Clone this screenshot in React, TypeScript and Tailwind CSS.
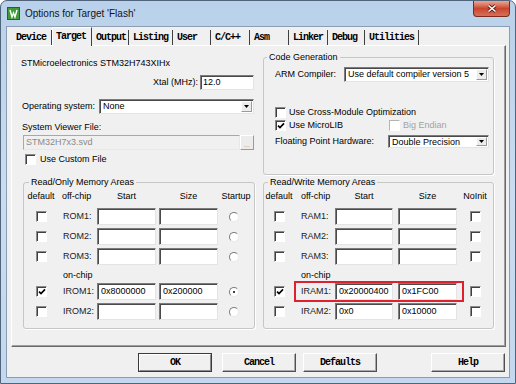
import type { ReactNode } from "react";

const SANS = "font-['Liberation_Sans',Arial,sans-serif]";
const MONO = "font-['Liberation_Mono','Courier_New',monospace]";

const sunken =
  "border border-t-[#7b7b7b] border-l-[#7b7b7b] border-r-[#e4e4e4] border-b-[#e4e4e4] shadow-[inset_1px_1px_0_#4a4a4a]";

const tabs = [
  { label: "Device", w: "w-[40px]" },
  { label: "Target", w: "w-[40px]", active: true },
  { label: "Output", w: "w-[37px]" },
  { label: "Listing", w: "w-[44px]" },
  { label: "User", w: "w-[38px]" },
  { label: "C/C++", w: "w-[39px]" },
  { label: "Asm", w: "w-[39px]" },
  { label: "Linker", w: "w-[39px]" },
  { label: "Debug", w: "w-[37px]" },
  { label: "Utilities", w: "w-[54px]" },
];

const Check = ({ checked, disabled }: { checked?: boolean; disabled?: boolean }) => (
  <span
    className={
      disabled
        ? "relative inline-block h-[11px] w-[11px] shrink-0 border border-t-[#b4b4b4] border-l-[#b4b4b4] border-r-white border-b-white bg-white"
        : "relative inline-block h-[11px] w-[11px] shrink-0 border border-t-[#8a8a8a] border-l-[#8a8a8a] border-r-white border-b-white bg-white shadow-[inset_1px_1px_0_#404040]"
    }
  >
    {checked && (
      <svg className="absolute left-[1px] top-[1px]" width="8" height="8" viewBox="0 0 8 8">
        <path d="M1 3.6 L3 5.6 L7 1.4" stroke="#000" strokeWidth="1.7" fill="none" />
      </svg>
    )}
  </span>
);

const Radio = ({ on }: { on?: boolean }) => (
  <span className="relative inline-block h-[10px] w-[10px] shrink-0 rounded-full border border-t-[#7d7d7d] border-l-[#7d7d7d] border-r-[#e8e8e8] border-b-[#e8e8e8] bg-white">
    {on && <span className="absolute left-[3px] top-[3px] h-[2px] w-[2px] rounded-full bg-black" />}
  </span>
);

const Input = ({ w, value }: { w: string; value?: string }) => (
  <div className={`${w} h-[17px] bg-white pl-[3px] text-[9px] leading-[14px] ${sunken}`}>
    {value}
  </div>
);

const Select = ({ w, h, value }: { w: string; h: string; value: string }) => (
  <div className={`${w} ${h} flex items-stretch bg-white ${sunken}`}>
    <span className="flex-1 truncate pl-[3px] text-[9px] leading-[12px]">{value}</span>
    <span className="my-[1px] mr-[1px] flex w-[11px] items-center justify-center border border-t-white border-l-white border-r-[#9a9a9a] border-b-[#9a9a9a] bg-[#ececec]">
      <svg width="5" height="3" viewBox="0 0 5 3">
        <path d="M0 0 H5 L2.5 3 Z" fill="#000" />
      </svg>
    </span>
  </div>
);

const Group = ({ title, legendMl, h, children }: { title: string; legendMl: string; h: string; children: ReactNode }) => (
  <fieldset className={`${h} rounded-[3px] border border-[#c6c6c6] shadow-[1px_1px_0_#ffffff]`}>
    <legend className={`${legendMl} px-[2px] text-[9px] leading-[12px] text-black`}>{title}</legend>
    {children}
  </fieldset>
);

type MemRow = { name: string; start?: string; size?: string; on?: boolean; flag?: boolean };

const romRows: MemRow[] = [
  { name: "ROM1:" },
  { name: "ROM2:" },
  { name: "ROM3:" },
];
const iromRows: MemRow[] = [
  { name: "IROM1:", start: "0x8000000", size: "0x200000", on: true, flag: true },
  { name: "IROM2:" },
];
const ramRows: MemRow[] = [
  { name: "RAM1:" },
  { name: "RAM2:" },
  { name: "RAM3:" },
];
const iramRows: MemRow[] = [
  { name: "IRAM1:", start: "0x20000400", size: "0x1FC00", on: true },
  { name: "IRAM2:", start: "0x0", size: "0x10000" },
];

const RomLine = ({ row }: { row: MemRow }) => (
  <div className="flex h-[17px] items-center">
    <div className="flex w-[34px] justify-center">
      <Check checked={row.on} />
    </div>
    <div className="w-[39px] pl-[5px] text-[9px] text-[#222]">{row.name}</div>
    <Input w="w-[59px]" value={row.start} />
    <div className="w-[3px]" />
    <Input w="w-[59px]" value={row.size} />
    <div className="flex w-[36px] justify-center pr-[4px]">
      <Radio on={row.flag} />
    </div>
  </div>
);

const RamLine = ({ row, marked }: { row: MemRow; marked?: boolean }) => (
  <div className="relative flex h-[17px] items-center">
    <div className="flex w-[30px] justify-center">
      <Check checked={row.on} />
    </div>
    <div className="w-[41px] pl-[7px] text-[9px] text-[#222]">{row.name}</div>
    <Input w="w-[58px]" value={row.start} />
    <div className="w-[5px]" />
    <Input w="w-[59px]" value={row.size} />
    <div className="flex w-[36px] justify-center">
      <Check />
    </div>
    {marked && (
      <div className="pointer-events-none absolute left-[30px] top-[-2px] h-[21px] w-[170px] border-2 border-[#e0202e]" />
    )}
  </div>
);

const Btn = ({ label, w, isDefault }: { label: string; w: string; isDefault?: boolean }) =>
  isDefault ? (
    <div className={`${w} h-[19px] border border-[#3a3a3a]`}>
      <div className={`flex h-full items-center justify-center border border-t-white border-l-white border-r-[#8a8a8a] border-b-[#8a8a8a] bg-[#f0f0f0] text-[10px] font-bold tracking-[-1px] ${MONO}`}>
        {label}
      </div>
    </div>
  ) : (
    <div className={`${w} flex h-[19px] items-center justify-center border border-t-white border-l-white border-r-[#505050] border-b-[#505050] bg-[#f0f0f0] shadow-[inset_-1px_-1px_0_#a8a8a8] text-[10px] font-bold tracking-[-1px] ${MONO}`}>
      {label}
    </div>
  );

export default function App() {
  return (
    <div className={`h-[384px] w-[516px] bg-white ${SANS}`}>
      <div className="flex h-full w-full flex-col overflow-hidden rounded-t-[7px] border border-[#50647b] bg-gradient-to-b from-[#b9d1ea] via-[#cadcf0] to-[#c3d8ee]">
        {/* title bar */}
        <div className="relative flex h-[25px] items-center pl-[6px]">
          <svg width="13" height="13" viewBox="0 0 13 13">
            <rect x="0.5" y="0.5" width="12" height="12" fill="#3e9a3a" stroke="#27602a" />
            <path d="M3 3 L5 10 L6.5 6 L8 10 L10 3" stroke="#ffffff" strokeWidth="1.4" fill="none" />
          </svg>
          <span className="ml-[5px] text-[10px] leading-[12px] text-[#141414]">Options for Target 'Flash'</span>
          <div className="absolute right-[5px] top-0 flex h-[16px] w-[37px] items-center justify-center rounded-b-[4px] border border-t-0 border-[#7d2a1d] bg-gradient-to-b from-[#e8a897] via-[#c9452d] to-[#d4705a]">
            <svg width="10" height="9" viewBox="0 0 10 9">
              <path d="M1.5 1.5 L8.5 7.5 M8.5 1.5 L1.5 7.5" stroke="#5a1a10" strokeWidth="3.2" />
              <path d="M1.5 1.5 L8.5 7.5 M8.5 1.5 L1.5 7.5" stroke="#ffffff" strokeWidth="1.6" />
            </svg>
          </div>
        </div>

        {/* client */}
        <div className="mx-[5px] mb-[5px] flex flex-1 flex-col border border-[#8a9db3] bg-[#f0f0f0]">
          {/* tabs */}
          <div className={`flex h-[18px] items-end pl-[5px] ${MONO}`}>
            {tabs.map((t) =>
              t.active ? (
                <div
                  key={t.label}
                  className={`${t.w} relative z-10 -mb-[1px] flex h-[19px] items-center border border-b-0 border-t-white border-l-white border-r-[#404040] bg-[#f0f0f0] pb-[2px] pl-[3px] text-[10px] font-bold tracking-[-1px] text-black`}
                >
                  {t.label}
                </div>
              ) : (
                <div
                  key={t.label}
                  className={`${t.w} flex h-[15px] items-center border-r border-[#404040] pl-[4px] text-[10px] font-bold tracking-[-1px] text-black`}
                >
                  {t.label}
                </div>
              )
            )}
          </div>

          {/* tab panel */}
          <div className="ml-[4px] flex h-[302px] w-[495px] gap-[8px] border border-t-white border-l-white border-r-[#696969] border-b-[#696969] shadow-[inset_-1px_-1px_0_#a0a0a0] pl-[9px] text-[9px] text-black">
            {/* left column */}
            <div className="flex w-[234px] flex-col">
              <div className="mt-[11px] h-[12px] leading-[12px]">STMicroelectronics STM32H743XIHx</div>

              <div className="mt-[6px] flex h-[15px] items-center justify-end pr-[1px]">
                <span className="mr-[2px]">Xtal (MHz):</span>
                <div className={`flex h-[15px] w-[54px] items-center bg-white pl-[2px] ${sunken}`}>12.0</div>
              </div>

              <div className="mt-[9px] flex h-[15px] items-center pr-[1px]">
                <span className="ml-[1px]">Operating system:</span>
                <div className="ml-auto">
                  <Select w="w-[155px]" h="h-[15px]" value="None" />
                </div>
              </div>

              <div className="ml-[1px] mt-[7px] h-[12px] leading-[12px]">System Viewer File:</div>

              <div className="ml-[2px] mt-[2px] flex h-[15px]">
                <div className="flex w-[217px] items-center border border-t-[#a8a8a8] border-l-[#a8a8a8] border-r-[#e8e8e8] border-b-[#e8e8e8] bg-[#f0f0f0] pl-[2px] text-[#8a8a8a]">
                  STM32H7x3.svd
                </div>
                <div className="flex w-[14px] items-end justify-center border border-t-white border-l-white border-r-[#9a9a9a] border-b-[#9a9a9a] bg-[#ececec] pb-[1px] text-[7px] leading-[7px] text-[#9a9a9a]">
                  ...
                </div>
              </div>

              <div className="ml-[4px] mt-[4px] flex h-[11px] items-center gap-[4px]">
                <Check />
                <span>Use Custom File</span>
              </div>

              <div className="ml-[2px] mt-[11px] w-[232px]">
                <Group title="Read/Only Memory Areas" legendMl="ml-[5px]" h="h-[153px]">
                  <div className="mt-[2px] flex h-[12px] items-center leading-[12px]">
                    <div className="w-[34px] text-center">default</div>
                    <div className="w-[39px] pl-[4px]">off-chip</div>
                    <div className="w-[59px] text-center">Start</div>
                    <div className="w-[3px]" />
                    <div className="w-[59px] text-center">Size</div>
                    <div className="w-[36px] text-center">Startup</div>
                  </div>
                  <div className="mt-[6px] flex flex-col gap-[3px]">
                    {romRows.map((r) => (
                      <RomLine key={r.name} row={r} />
                    ))}
                  </div>
                  <div className="mt-[3px] flex h-[15px] items-center pl-[39px]">on-chip</div>
                  <div className="flex flex-col gap-[3px]">
                    {iromRows.map((r) => (
                      <RomLine key={r.name} row={r} />
                    ))}
                  </div>
                </Group>
              </div>
            </div>

            {/* right column */}
            <div className="flex w-[231px] flex-col">
              <div className="mt-[5px]">
                <Group title="Code Generation" legendMl="ml-[3px]" h="h-[124px]">
                  <div className="mt-[4px] flex h-[15px] items-center pl-[11px]">
                    <span className="w-[69px]">ARM Compiler:</span>
                    <Select w="w-[145px]" h="h-[15px]" value="Use default compiler version 5" />
                  </div>
                  <div className="mt-[24px] flex h-[13px] items-center gap-[3px] pl-[11px]">
                    <Check />
                    <span>Use Cross-Module Optimization</span>
                  </div>
                  <div className="flex h-[13px] items-center pl-[11px]">
                    <div className="flex w-[114px] items-center gap-[3px]">
                      <Check checked />
                      <span>Use MicroLIB</span>
                    </div>
                    <div className="flex items-center gap-[3px] text-[#a3a3a3]">
                      <Check disabled />
                      <span>Big Endian</span>
                    </div>
                  </div>
                  <div className="mt-[3px] flex h-[13px] items-center pl-[11px]">
                    <span className="w-[113px]">Floating Point Hardware:</span>
                    <Select w="w-[101px]" h="h-[13px]" value="Double Precision" />
                  </div>
                </Group>
              </div>

              <div className="mt-[1px]">
                <Group title="Read/Write Memory Areas" legendMl="ml-[4px]" h="h-[153px]">
                  <div className="mt-[2px] flex h-[12px] items-center leading-[12px]">
                    <div className="w-[30px] text-center">default</div>
                    <div className="w-[41px] pl-[7px]">off-chip</div>
                    <div className="w-[58px] text-center">Start</div>
                    <div className="w-[5px]" />
                    <div className="w-[59px] text-center">Size</div>
                    <div className="w-[36px] text-center">NoInit</div>
                  </div>
                  <div className="mt-[6px] flex flex-col gap-[3px]">
                    {ramRows.map((r) => (
                      <RamLine key={r.name} row={r} />
                    ))}
                  </div>
                  <div className="mt-[3px] flex h-[15px] items-center pl-[37px]">on-chip</div>
                  <div className="flex flex-col gap-[3px]">
                    {iramRows.map((r, i) => (
                      <RamLine key={r.name} row={r} marked={i === 0} />
                    ))}
                  </div>
                </Group>
              </div>
            </div>
          </div>

          {/* buttons */}
          <div className="mt-[6px] flex pl-[131px]">
            <Btn label="OK" w="w-[74px]" isDefault />
            <div className="w-[10px]" />
            <Btn label="Cancel" w="w-[74px]" />
            <div className="w-[7px]" />
            <Btn label="Defaults" w="w-[74px]" />
            <div className="w-[54px]" />
            <Btn label="Help" w="w-[74px]" />
          </div>
        </div>
      </div>
    </div>
  );
}
